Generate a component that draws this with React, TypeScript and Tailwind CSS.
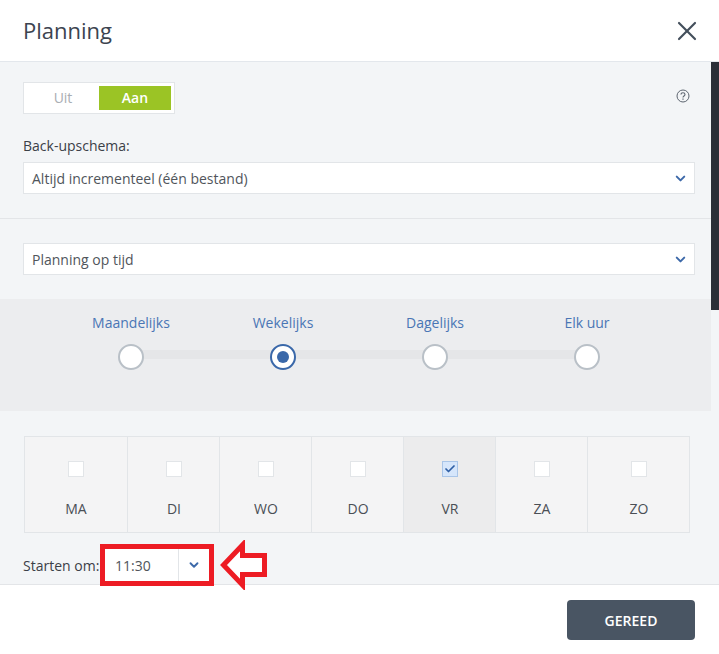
import { X, ChevronDown, Check } from 'lucide-react';

const freqs = ['Maandelijks', 'Wekelijks', 'Dagelijks', 'Elk uur'];
const days = [
  { label: 'MA', w: 'w-[102px]' },
  { label: 'DI', w: 'w-[92px]' },
  { label: 'WO', w: 'w-[92px]' },
  { label: 'DO', w: 'w-[92px]' },
  { label: 'VR', w: 'w-[92px]', checked: true },
  { label: 'ZA', w: 'w-[92px]' },
  { label: 'ZO', w: 'w-[102px]' },
];

function Select({ value }: { value: string }) {
  return (
    <div className="flex h-8 w-[672px] items-center justify-between border border-[#e2e5e8] bg-white pl-2 pr-[6px] text-[14px] text-[#50555b]">
      <span>{value}</span>
      <ChevronDown size={15} strokeWidth={3.2} className="text-[#3d69a9]" />
    </div>
  );
}

export default function App() {
  return (
    <main className="relative h-[654px] w-[719px] overflow-hidden bg-white font-['Open_Sans',sans-serif]">
      <header className="flex h-[62px] items-center justify-between border-b border-[#e3e7ec] pl-[23px] pr-4">
        <h1 className="text-[22px] text-[#3c4450]">Planning</h1>
        <X size={32} strokeWidth={1.6} className="text-[#444f5c]" />
      </header>

      <section className="relative h-[522px] bg-[#f3f5f7]">
        <div className="absolute right-0 top-0 h-[248px] w-2 bg-[#2b2f38]" />

        <div className="flex items-start justify-between pl-[23px] pr-[29px] pt-5">
          <div className="flex h-8 w-[152px] items-center border border-[#e2e5e8] bg-white pl-[3px] text-[14px]">
            <span className="w-[72px] pb-[2px] text-center text-[#a9adb3]">Uit</span>
            <span className="flex h-6 w-[72px] items-center justify-center bg-[#9bc425] pb-[2px] font-semibold text-white">Aan</span>
          </div>
          <svg width="14" height="14" viewBox="0 0 14 14" className="mt-[7px] text-[#5d6570]" fill="none" stroke="currentColor">
            <circle cx="7" cy="7" r="6" strokeWidth="1" />
            <path d="M5 5.6C5 4.4 5.9 3.7 7 3.7s2 .7 2 1.8c0 1.5-2 1.6-2 3.1" strokeWidth="1.1" />
            <path d="M7 9.6v1.2" strokeWidth="1.2" />
          </svg>
        </div>

        <p className="ml-[23px] mt-[22px] text-[14px] leading-5 text-[#3b4047]">Back-upschema:</p>
        <div className="ml-[23px] mt-[6px]">
          <Select value="Altijd incrementeel (één bestand)" />
        </div>

        <div className="mr-2 mt-6 border-t border-[#e3e5e8]" />

        <div className="ml-[23px] mt-6">
          <Select value="Planning op tijd" />
        </div>

        <div className="relative mr-2 mt-6 h-28 bg-[#ecedef]">
          <div className="absolute left-[131px] top-[51px] h-[9px] w-[456px] bg-[#e5e6e8]" />
          <div className="relative flex pl-[55px] pt-[14px]">
            {freqs.map((f, i) => (
              <div key={f} className="flex w-[152px] flex-col items-center">
                <span className="text-[14px] leading-5 text-[#4a76b5]">{f}</span>
                <span
                  className={
                    i === 1
                      ? 'mt-[11px] flex h-[26px] w-[26px] items-center justify-center rounded-full border-2 border-[#3a68a9] bg-white'
                      : 'mt-[11px] h-[26px] w-[26px] rounded-full border-2 border-[#b9c0c7] bg-white'
                  }
                >
                  {i === 1 && <span className="h-3 w-3 rounded-full bg-[#3a68a9]" />}
                </span>
              </div>
            ))}
          </div>
        </div>

        <div className="ml-6 mt-[25px] flex h-[97px] w-[666px] border border-[#e2e5e8] bg-[#f4f4f5]">
          {days.map((d, i) => (
            <div
              key={d.label}
              className={`${d.w} flex flex-col items-center pt-6 ${i > 0 ? 'border-l border-[#e2e5e8] pl-px' : ''} ${d.checked ? 'bg-[#ececed]' : ''}`}
            >
              {d.checked ? (
                <span className="flex h-4 w-4 items-center justify-center border border-[#a9c5e8] bg-[#d6e6fb]">
                  <Check size={12} strokeWidth={3.5} className="text-[#2f5fa5]" />
                </span>
              ) : (
                <span className="h-4 w-4 border border-[#e2e5e8] bg-white" />
              )}
              <span className="mt-[22px] text-[14px] leading-5 text-[#4a4f55]">{d.label}</span>
            </div>
          ))}
        </div>

        <div className="relative z-10 ml-[23px] mt-[11px] flex h-[42px] items-center">
          <span className="w-[77px] text-[14px] text-[#3b4047]">Starten om:</span>
          <div className="flex h-[42px] w-[114px] border-[5px] border-[#ed1c24] bg-white text-[14px] text-[#50555b]">
            <span className="flex w-[73px] items-center pl-[10px]">11:30</span>
            <span className="flex flex-1 items-center justify-center border-l border-[#e2e5e8]">
              <ChevronDown size={14} strokeWidth={3.2} className="text-[#3d69a9]" />
            </span>
          </div>
          <svg width="48" height="50" viewBox="0 0 48 50" className="ml-[5px]" fill="none">
            <path d="M23.5 5 4.5 25l19 20V34.5h22v-19h-22Z" fill="white" stroke="#ed1c24" strokeWidth="5" />
          </svg>
        </div>
      </section>

      <footer className="flex h-[70px] items-start justify-end border-t border-[#e3e5e8] bg-white pr-6 pt-[15px]">
        <button className="h-10 w-[128px] rounded bg-[#495563] text-[14px] font-semibold text-white">GEREED</button>
      </footer>
    </main>
  );
}
